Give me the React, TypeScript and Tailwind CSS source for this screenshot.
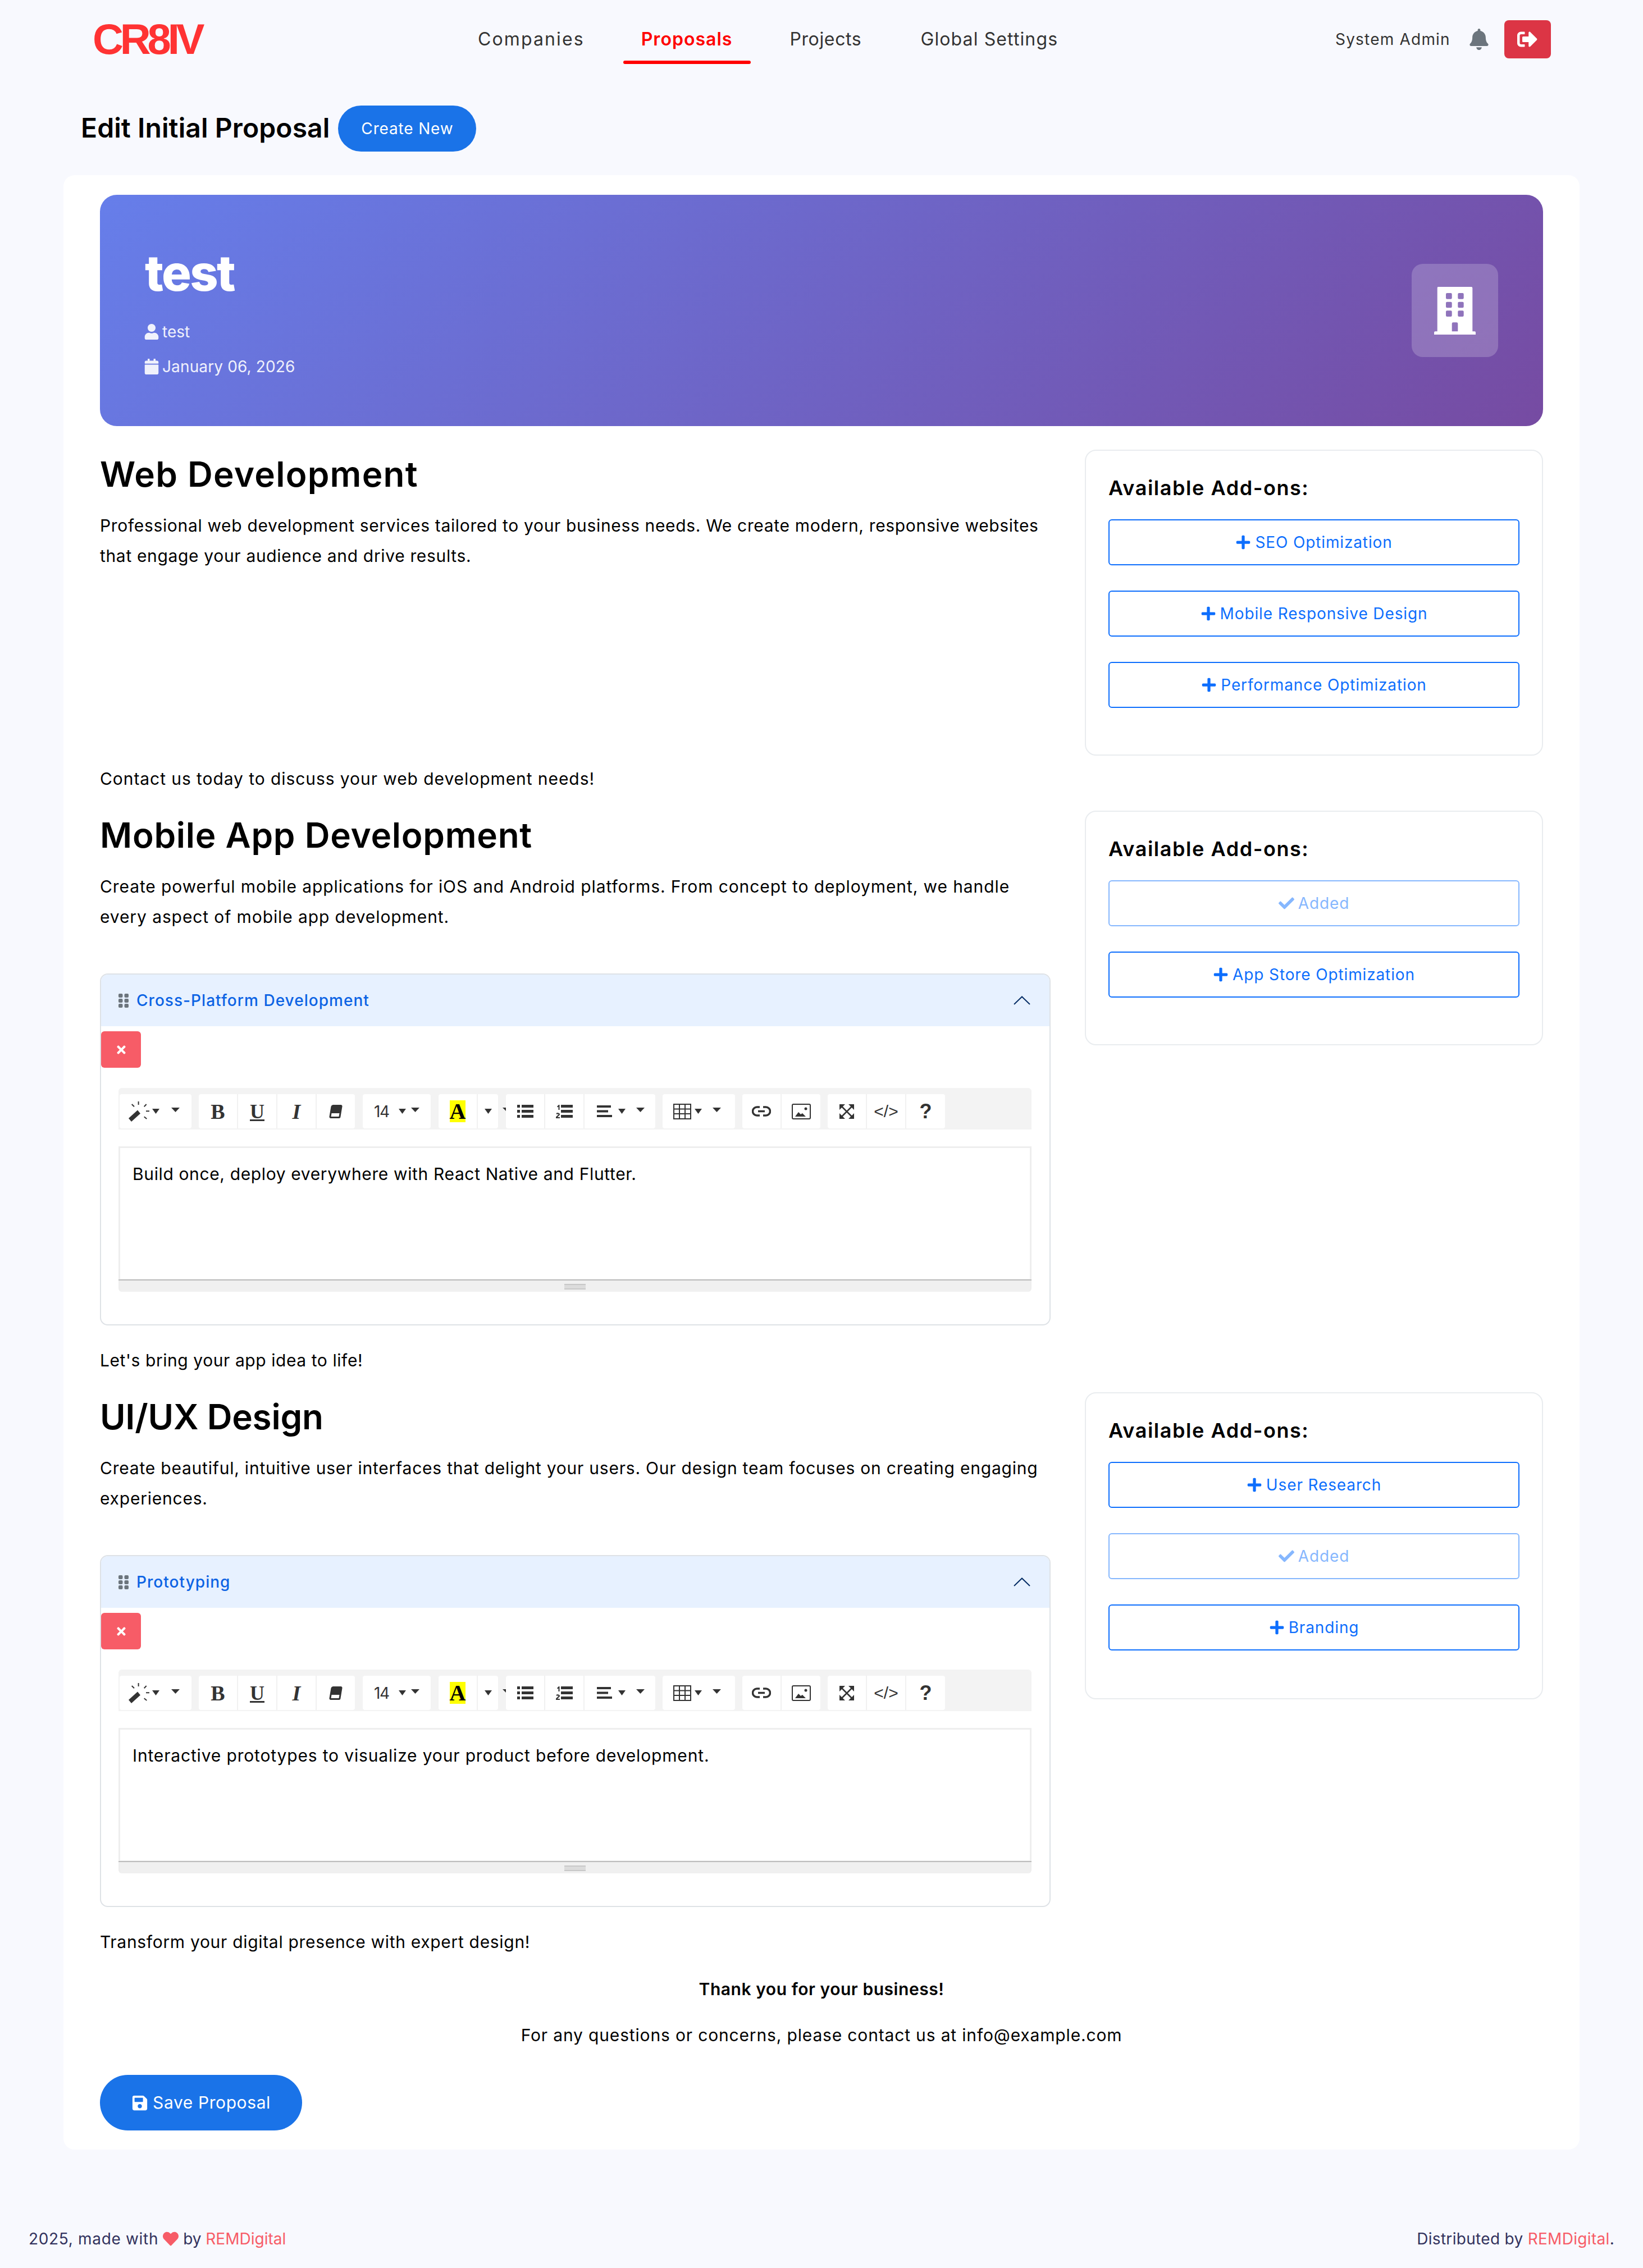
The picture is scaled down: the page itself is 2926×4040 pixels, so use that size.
import React from "react";
import { FaUser, FaCalendar, FaPlus, FaCheck, FaSave, FaHeart, FaBell, FaSignOutAlt, FaTimes } from "react-icons/fa";

const Caret = () => (
  <svg width="13" height="9" viewBox="0 0 13 9" className="shrink-0"><path d="M0 0h13L6.500 9z" fill="#333" /></svg>
);
const CaretWide = () => (
  <svg width="15" height="8" viewBox="0 0 15 8" className="shrink-0"><path d="M0 0h15L7.500 8z" fill="#333" /></svg>
);

const Wand = () => (
  <svg width="37" height="36" viewBox="0 0 37 36" fill="#333" className="shrink-0">
    <path d="M0 30L16 15.600 21 21.600 5 36z" />
    <path d="M17.600 0v6M5.700 5L10 9.300M31.700 5L27.700 9.300M31 17.300H37M27.700 27.300L32.300 31" stroke="#333" strokeWidth="2" fill="none" />
  </svg>
);
const Eraser = () => (
  <svg width="24" height="24" viewBox="0 0 24 24"><path d="M7 0h14a2.500 2.500 0 0 1 2.500 3L20.500 21a3 3 0 0 1-3 3H3a2.500 2.500 0 0 1-2.500-3L3.500 3A4 4 0 0 1 7 0z" fill="#333" /><path d="M4.500 15h14l-1 6H3.500z" fill="#fff" /></svg>
);
const ListUl = () => (
  <svg width="29" height="23" viewBox="0 0 29 23" fill="#333"><rect x="0" y="0" width="5" height="5" /><rect x="0" y="9" width="5" height="5" /><rect x="0" y="18" width="5" height="5" /><rect x="8" y="0" width="21" height="5" /><rect x="8" y="9" width="21" height="5" /><rect x="8" y="18" width="21" height="5" /></svg>
);
const ListOl = () => (
  <svg width="30" height="24" viewBox="0 0 30 24" fill="#333"><rect x="9" y="0" width="21" height="5" /><rect x="9" y="9" width="21" height="5" /><rect x="9" y="18" width="21" height="5" /><path d="M2 3l3-3h1.500v9H4.500V3.500L3 4.500z" /><path d="M0.500 15.500C1 13.500 7 13.500 7 17c0 2-3 3-4 5h4v2H0v-2c1-2.500 4.500-3.500 4.500-5 0-1.200-2-1-2.300.5z" /></svg>
);
const Align = () => (
  <svg width="27" height="21" viewBox="0 0 27 21" fill="#333"><rect width="25" height="4" /><rect y="8.500" width="20" height="4" /><rect y="17" width="27" height="4" /></svg>
);
const Table = () => (
  <svg width="32" height="28" viewBox="0 0 32 28" fill="none" stroke="#333" strokeWidth="2"><rect x="1" y="1" width="30" height="26" /><path d="M1 9.500h30M1 18h30M11 1v26M21 1v26" /></svg>
);
const LinkI = () => (
  <svg width="34" height="20" viewBox="0 0 34 20" fill="none" stroke="#333" strokeWidth="3.500"><path d="M14 2H9a7.500 7.500 0 0 0 0 15h5M20 2h5a7.500 7.500 0 0 1 0 15h-5M11 9.500h12" /></svg>
);
const Pic = () => (
  <svg width="34" height="28" viewBox="0 0 34 28"><rect x="1" y="1" width="32" height="26" rx="2" fill="#fff" stroke="#333" strokeWidth="2" /><path d="M6 23l6-8 4 4 3-2 6 6z" fill="#333" /><circle cx="25" cy="9" r="2.500" fill="#333" /></svg>
);
const Expand = () => (
  <svg width="26" height="26" viewBox="0 0 26 26" fill="#333"><path d="M0 0h10L0 10zM26 0v10L16 0zM0 26V16l10 10zM26 26H16l10-10z" /><path d="M4 4l18 18M22 4L4 22" stroke="#333" strokeWidth="2.500" /></svg>
);
const Grip = () => (
  <svg width="18" height="25" viewBox="0 0 18 25" fill="#6c757d" className="shrink-0">
    <rect x="0" y="0" width="7.500" height="7" rx="2" /><rect x="10.500" y="0" width="7.500" height="7" rx="2" />
    <rect x="0" y="9" width="7.500" height="7" rx="2" /><rect x="10.500" y="9" width="7.500" height="7" rx="2" />
    <rect x="0" y="18" width="7.500" height="7" rx="2" /><rect x="10.500" y="18" width="7.500" height="7" rx="2" />
  </svg>
);
const Building = () => (
  <svg width="74" height="85" viewBox="0 0 74 85" fill="#fff">
    <path fillRule="evenodd" d="M8 0h58.300a2 2 0 0 1 2 2v77.300h3.700a2 2 0 0 1 2 2V85H0v-3.700a2 2 0 0 1 2-2h3.700V2a2 2 0 0 1 2.300-2zM23 11a2 2 0 0 0-2 2v6.700a2 2 0 0 0 2 2h6.700a2 2 0 0 0 2-2V13a2 2 0 0 0-2-2zM44.300 11a2 2 0 0 0-2 2v6.700a2 2 0 0 0 2 2h6.400a2 2 0 0 0 2-2V13a2 2 0 0 0-2-2zM23 26.700a2 2 0 0 0-2 2v6.600a2 2 0 0 0 2 2h6.700a2 2 0 0 0 2-2v-6.600a2 2 0 0 0-2-2zM44.300 26.700a2 2 0 0 0-2 2v6.600a2 2 0 0 0 2 2h6.400a2 2 0 0 0 2-2v-6.600a2 2 0 0 0-2-2zM23 42.300a2 2 0 0 0-2 2V51a2 2 0 0 0 2 2h6.700a2 2 0 0 0 2-2v-6.700a2 2 0 0 0-2-2zM44.300 42.300a2 2 0 0 0-2 2V51a2 2 0 0 0 2 2h6.400a2 2 0 0 0 2-2v-6.700a2 2 0 0 0-2-2zM34 63.300a2.300 2.300 0 0 0-2.300 2.300v13.700h10.600V65.600a2.300 2.300 0 0 0-2.300-2.300z" />
  </svg>
);

const Btn = ({ w, children, last }: { w: string; children: React.ReactNode; last?: boolean }) => (
  <div className={`flex h-full items-center justify-center ${w} ${last ? "" : "border-r-2 border-[#f1f1f1]"}`}>{children}</div>
);
const Group = ({ children, cls = "" }: { children: React.ReactNode; cls?: string }) => (
  <div className={`flex h-[61px] rounded-[4px] bg-white ${cls}`}>{children}</div>
);
const Serif = ({ children, cls = "" }: { children: React.ReactNode; cls?: string }) => (
  <span className={`font-['Liberation_Serif',serif] font-bold leading-none text-[#333] ${cls}`}>{children}</span>
);

const Toolbar = () => (
  <div className="flex h-[74px] gap-[13px] rounded-t-[6px] bg-[#f3f3f3] pl-[2px] pt-[11px]">
    <Group cls="w-[128px] items-center pl-[16px]">
      <Wand />
      <span className="ml-[5px]"><Caret /></span>
      <span className="ml-[21px] -mt-[6px]"><CaretWide /></span>
    </Group>
    <Group>
      <Btn w="w-[70px]"><Serif cls="text-[38px]">B</Serif></Btn>
      <Btn w="w-[70px]"><Serif cls="text-[36px] underline">U</Serif></Btn>
      <Btn w="w-[70px]"><Serif cls="text-[38px] italic">I</Serif></Btn>
      <Btn w="w-[68px]" last><Eraser /></Btn>
    </Group>
    <Group cls="ml-[1px] w-[121px] items-center pl-[20px]">
      <span className="font-['Inter',sans-serif] text-[28px] leading-none tracking-[-0.05em] text-[#333]">14</span>
      <span className="ml-[17px]"><Caret /></span>
      <span className="ml-[9px] -mt-[6px]"><CaretWide /></span>
    </Group>
    <Group cls="ml-[1px]">
      <Btn w="w-[70px]"><span className="flex h-[39px] w-[28px] items-center justify-center bg-[#ffff00]"><Serif cls="text-[40px] text-black">A</Serif></span></Btn>
      <Btn w="w-[36px]" last><Caret /></Btn>
    </Group>
    <div className="relative -ml-[13px] w-0"><svg width="6" height="6" viewBox="0 0 6 6" className="absolute left-[8px] top-[24px]"><path d="M0 0h6v6z" fill="#333" /></svg></div>
    <Group cls="ml-[1px]">
      <Btn w="w-[70px]"><ListUl /></Btn>
      <Btn w="w-[70px]"><ListOl /></Btn>
      <div className="flex h-full w-[126px] items-center pl-[22px]">
        <Align />
        <span className="ml-[11px]"><Caret /></span>
        <span className="ml-[19px] -mt-[6px]"><CaretWide /></span>
      </div>
    </Group>
    <Group cls="w-[129px] items-center pl-[19px]">
      <Table />
      <span className="ml-[6px]"><Caret /></span>
      <span className="ml-[19px] -mt-[6px]"><CaretWide /></span>
    </Group>
    <Group>
      <Btn w="w-[70px]"><LinkI /></Btn>
      <Btn w="w-[69px]" last><Pic /></Btn>
    </Group>
    <Group>
      <Btn w="w-[70px]"><Expand /></Btn>
      <Btn w="w-[70px]"><span className="font-['Liberation_Sans',sans-serif] text-[30px] leading-none text-[#333]">&lt;/&gt;</span></Btn>
      <Btn w="w-[69px]" last><span className="font-['Liberation_Sans',sans-serif] text-[36px] font-bold leading-none text-[#333]">?</span></Btn>
    </Group>
  </div>
);

const Accordion = ({ title, text, track }: { title: string; text: string; track: string }) => (
  <div className="h-[627px] rounded-[14px] border-2 border-[#dee2e6]">
    <div className="flex h-[92px] items-center justify-between rounded-t-[12px] bg-[#e7f1ff] pl-[31px] pr-[34px]">
      <div className="flex items-center gap-[14px]">
        <Grip />
        <span className="text-[28px] font-medium tracking-[0.037em] text-[#0c63e4]">{title}</span>
      </div>
      <svg width="30" height="16" viewBox="0 0 30 16" fill="none" stroke="#052c65" strokeWidth="2"><path d="M1 15L15 1.500 29 15" /></svg>
    </div>
    <div className="mt-[9px] flex h-[65px] w-[71px] items-center justify-center rounded-[6px] bg-[#f75c67]">
      <FaTimes className="text-white" size={22} />
    </div>
    <div className="ml-[31px] mr-[32px] mt-[36px]">
      <Toolbar />
      <div className="mt-[30px] h-[259px] rounded-b-[6px] border-x-[3px] border-t-[3px] border-[#eeeeee] bg-[#f0f0f0]">
        <div className="h-[233px] bg-white px-[22px] py-[29px] text-[30px] leading-[54px] text-black">
          <p className={`-mt-[10px] ${track}`}>{text}</p>
        </div>
        <div className="-mx-[3px] mt-[1px] h-[2px] bg-[#bdbdbd]" />
        <div className="flex justify-center pt-[6px]">
          <div className="flex h-[10px] w-[38px] flex-col justify-between bg-[#dcdcdc]"><div className="h-[2px] bg-[#c8c8c8]" /><div className="h-[2px] bg-[#c8c8c8]" /></div>
        </div>
      </div>
    </div>
  </div>
);

const AddBtn = ({ label, added }: { label: string; added?: boolean }) => (
  <div className={`flex h-[82px] items-center justify-center gap-[7px] rounded-[6px] border-2 text-[28px] ${added ? "border-[#86b7fe] text-[#86b7fe]" : "border-[#0d6efd] text-[#0d6efd]"}`}>
    {added ? <FaCheck size={28} /> : <FaPlus size={28} />}
    <span className="tracking-[0.031em]">{label}</span>
  </div>
);

const Panel = ({ h, items }: { h: string; items: { label: string; added?: boolean }[] }) => (
  <div className={`w-[816px] shrink-0 rounded-[20px] border-2 border-[#e9ecef] px-[40px] pt-[41px] ${h}`}>
    <h3 className="mb-[31px] h-[50px] text-[36px] font-semibold leading-[50px] tracking-[0.043em] text-black">Available Add-ons:</h3>
    <div className="flex flex-col gap-[45px]">
      {items.map((i) => <AddBtn key={i.label} {...i} />)}
    </div>
  </div>
);

const Section = ({ title, track, paraTrack, para, rowH, panel, children }: { title: string; track: string; paraTrack: string; para: React.ReactNode; rowH: string; panel: React.ReactNode; children: React.ReactNode }) => (
  <div className={`flex justify-between ${rowH}`}>
    <div className="w-[1693px] pt-[4px]">
      <h2 className={`h-[80px] text-[62px] font-semibold leading-[80px] text-black ${track}`}>{title}</h2>
      <p className={`mt-[24px] text-[30px] leading-[54px] text-black ${paraTrack}`}>{para}</p>
      {children}
    </div>
    {panel}
  </div>
);

export default function App() {
  return (
    <div className="h-[4040px] w-[2926px] overflow-hidden bg-[#f8f9fe] font-['Inter',sans-serif] text-black">
      <nav className="relative flex h-[140px] items-start">
        <div className="absolute left-[165px] top-[30px] font-['Liberation_Sans',sans-serif] text-[76px] font-bold leading-[80px] tracking-[-0.08em] text-[#ff3333]">CR8IV</div>
        <div className="ml-[851px] flex h-[114px] items-start">
          <a className="mt-[50px] text-[32px] leading-[40px] tracking-[0.066em] text-[#333]">Companies</a>
          <a className="relative ml-[101px] mt-[50px] text-[32px] font-semibold leading-[40px] tracking-[0.032em] text-[#ff0000]">
            Proposals
            <span className="absolute -left-[32px] -right-[33px] top-[58px] h-[6px] rounded-[3px] bg-[#ff0000]" />
          </a>
          <a className="ml-[102px] mt-[50px] text-[32px] leading-[40px] tracking-[0.02em] text-[#333]">Projects</a>
          <a className="ml-[105px] mt-[50px] text-[32px] leading-[40px] tracking-[0.035em] text-[#333]">Global Settings</a>
        </div>
        <div className="absolute left-[2378px] top-[36px] flex items-center">
          <span className="text-[28px] tracking-[0.043em] text-[#333]">System Admin</span>
          <FaBell className="ml-[32px] text-[#6c757d]" size={38} />
          <div className="ml-[26px] flex h-[68px] w-[83px] items-center justify-center rounded-[8px] bg-[#dc3545]"><FaSignOutAlt className="text-white" size={36} /></div>
        </div>
      </nav>
      <div className="flex h-[172px] items-start pl-[144px]">
        <h1 className="mt-[58px] text-[48px] font-semibold leading-[60px] tracking-[0.002em]">Edit Initial Proposal</h1>
        <div className="ml-[15px] mt-[48px] flex h-[82px] w-[246px] items-center justify-center rounded-[41px] bg-[#1a73e8] text-[28px] tracking-[0.03em] text-white">Create New</div>
      </div>
      <div className="mx-[113px] h-[3517px] rounded-[20px] bg-white px-[65px] pt-[35px]">
        <div className="flex h-[412px] items-center justify-between rounded-[30px] bg-[linear-gradient(135deg,#667eea_0%,#764ba2_100%)] px-[80px] text-white">
          <div>
            <div className="mt-[2px] text-[88px] font-extrabold leading-[100px] tracking-[-0.03em]">test</div>
            <div className="mt-[35px] flex items-center gap-[5px] text-[28px] leading-[40px] text-white/90"><FaUser size={28} className="-ml-[2px]" /><span>test</span></div>
            <div className="mt-[22px] flex items-center gap-[5px] text-[28px] leading-[40px] tracking-[0.005em] text-white/90"><FaCalendar size={28} className="-ml-[2px]" /><span>January 06, 2026</span></div>
          </div>
          <div className="flex h-[166px] w-[154px] items-center justify-center rounded-[20px] bg-white/20"><Building /></div>
        </div>
        <div className="mt-[42px]">
          <Section
            title="Web Development"
            track="tracking-[0.02em]"
            paraTrack="tracking-[0.022em]"
            rowH="h-[643px]"
            para={<>Professional web development services tailored to your business needs. We create modern, responsive websites that engage your audience and drive results.</>}
            panel={<Panel h="h-[545px]" items={[{ label: "SEO Optimization" }, { label: "Mobile Responsive Design" }, { label: "Performance Optimization" }]} />}
          >
            <p className="mt-[343px] text-[30px] leading-[54px] tracking-[0.031em]">Contact us today to discuss your web development needs!</p>
          </Section>
          <Section
            title="Mobile App Development"
            track="tracking-[0.012em]"
            paraTrack="tracking-[0.03em]"
            rowH="h-[1036px]"
            para={<>Create powerful mobile applications for iOS and Android platforms. From concept to deployment, we handle every aspect of mobile app development.</>}
            panel={<Panel h="h-[418px]" items={[{ label: "Added", added: true }, { label: "App Store Optimization" }]} />}
          >
            <div className="mt-[74px]"><Accordion title="Cross-Platform Development" track="tracking-[0.021em]" text="Build once, deploy everywhere with React Native and Flutter." /></div>
            <p className="mt-[35px] text-[30px] leading-[54px] tracking-[0.019em]">Let's bring your app idea to life!</p>
          </Section>
          <Section
            title="UI/UX Design"
            track="tracking-[-0.004em]"
            paraTrack="tracking-[0.026em]"
            rowH="h-[1036px]"
            para={<>Create beautiful, intuitive user interfaces that delight your users. Our design team focuses on creating engaging experiences.</>}
            panel={<Panel h="h-[547px]" items={[{ label: "User Research" }, { label: "Added", added: true }, { label: "Branding" }]} />}
          >
            <div className="mt-[74px]"><Accordion title="Prototyping" track="tracking-[0.028em]" text="Interactive prototypes to visualize your product before development." /></div>
            <p className="mt-[35px] text-[30px] leading-[54px] tracking-[0.023em]">Transform your digital presence with expert design!</p>
          </Section>
        </div>
        <div className="text-center text-[30px] leading-[54px]">
          <p className="font-semibold tracking-[0.018em]">Thank you for your business!</p>
          <p className="mt-[28px] tracking-[0.028em]">For any questions or concerns, please contact us at info@example.com</p>
        </div>
        <div className="mt-[44px] flex h-[99px] w-[360px] items-center justify-center gap-[8px] rounded-[50px] bg-[#1a73e8] text-[30px] tracking-[0.02em] text-white"><FaSave size={30} /><span>Save Proposal</span></div>
      </div>
      <footer className="mx-[51px] mt-[134px] flex items-center justify-between text-[28px] leading-[50px] text-[#32325d]">
        <div className="flex items-center gap-[8px]">
          <span className="tracking-[0.024em]">2025, made with</span><FaHeart className="text-[#f75c67]" size={28} /><span>by <span className="text-[#f75c67]">REMDigital</span></span>
        </div>
        <div className="tracking-[0.011em]">Distributed by <span className="text-[#f75c67]">REMDigital</span>.</div>
      </footer>
    </div>
  );
}
